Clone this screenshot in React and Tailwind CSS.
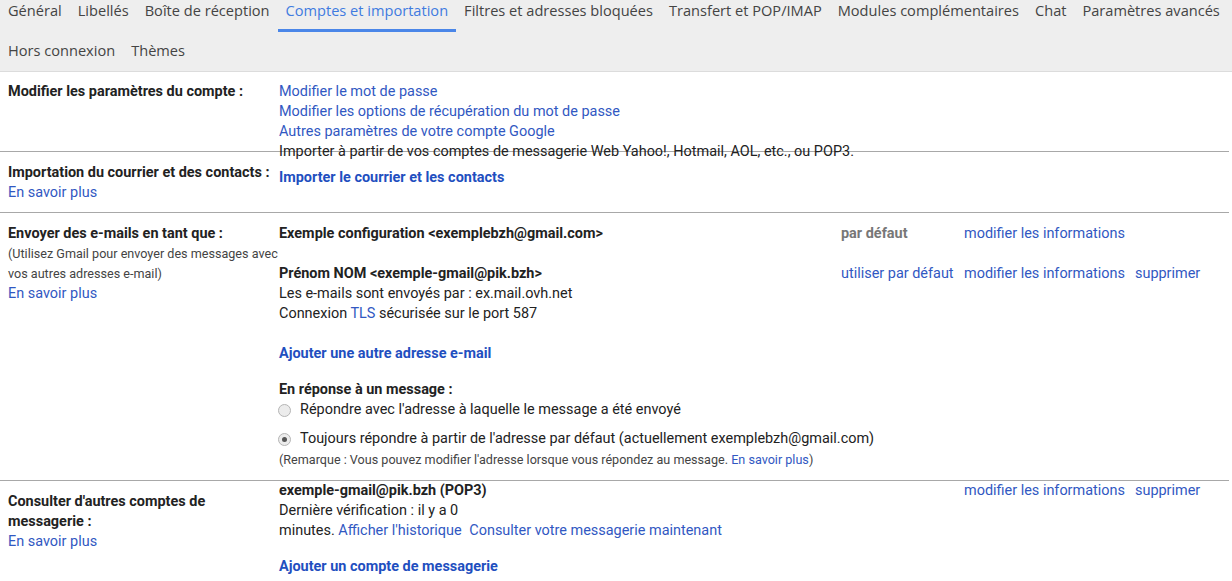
const tabs = [
  'Général',
  'Libellés',
  'Boîte de réception',
  'Comptes et importation',
  'Filtres et adresses bloquées',
  'Transfert et POP/IMAP',
  'Modules complémentaires',
  'Chat',
  'Paramètres avancés',
  'Hors connexion',
  'Thèmes',
];

function Radio({ checked }) {
  return (
    <span className="relative inline-flex w-[13px] h-[13px] shrink-0 rounded-full border border-[#b5b5b5] bg-[#ececec] items-center justify-center">
      {checked && <span className="w-[5px] h-[5px] rounded-full bg-[#555]" />}
    </span>
  );
}

export default function App() {
  const link = 'text-[#3158c2] cursor-pointer';
  const boldLink = 'font-bold text-[#1f4fbf] cursor-pointer';

  return (
    <div
      className="min-h-screen bg-white text-[14.45px] leading-5 text-[#222]"
      style={{ fontFamily: 'Roboto, "Liberation Sans", Arial, sans-serif' }}
    >
      {/* Tabs */}
      <div className="h-[72px] bg-[#eeeeee] border-b border-[#dcdcdc]">
        <div
          className="flex flex-wrap gap-y-2 text-[14.6px] text-[#444]"
          style={{ fontFamily: '"Open Sans", Roboto, sans-serif' }}
        >
          {tabs.map((t) => {
            const active = t === 'Comptes et importation';
            return (
              <div
                key={t}
                className={
                  'h-8 px-2 leading-5 cursor-pointer ' +
                  (active ? 'border-b-[3px] border-[#4a86e8] text-[#3f7be0]' : '')
                }
              >
                {t}
              </div>
            );
          })}
        </div>
      </div>

      {/* Modifier les paramètres du compte */}
      <div className="flex pt-[10px] pb-[9px]">
        <div className="w-[279px] pl-2 font-bold shrink-0">Modifier les paramètres du compte :</div>
        <div className="flex flex-col">
          <span className={link}>Modifier le mot de passe</span>
          <span className={link}>Modifier les options de récupération du mot de passe</span>
          <span className={link}>Autres paramètres de votre compte Google</span>
        </div>
      </div>

      {/* Importation */}
      <div className="flex border-t border-[#a8a8a8] mr-[3px] pt-[11px] pb-[9px]">
        <div className="w-[279px] pl-2 shrink-0">
          <div className="font-bold">Importation du courrier et des contacts :</div>
          <div className={link}>En savoir plus</div>
        </div>
        <div className="flex flex-col -mt-[21px]">
          <span>
            Importer à partir de vos comptes de messagerie Web Yahoo!, Hotmail, AOL, etc., ou POP3.
          </span>
          <span className={'mt-[6px] ' + boldLink}>Importer le courrier et les contacts</span>
        </div>
      </div>

      {/* Envoyer des e-mails en tant que */}
      <div className="flex border-t border-[#a8a8a8] mr-[3px] pt-[11px] pb-[10px]">
        <div className="w-[279px] pl-2 shrink-0">
          <div className="font-bold">Envoyer des e-mails en tant que :</div>
          <div className="text-[12.6px] leading-5 text-[#444]">
            (Utilisez Gmail pour envoyer des messages avec vos autres adresses e-mail)
          </div>
          <div className={link}>En savoir plus</div>
        </div>
        <div className="flex flex-col flex-1">
          <div className="flex">
            <div className="w-[562px] font-bold">Exemple configuration &lt;exemplebzh@gmail.com&gt;</div>
            <div className="w-[123px] font-bold text-[#777]">par défaut</div>
            <div className={'w-[171px] ' + link}>modifier les informations</div>
          </div>
          <div className="flex mt-5">
            <div className="w-[562px]">
              <div className="font-bold">Prénom NOM &lt;exemple-gmail@pik.bzh&gt;</div>
              <div>Les e-mails sont envoyés par : ex.mail.ovh.net</div>
              <div>
                Connexion <span className={link}>TLS</span> sécurisée sur le port 587
              </div>
            </div>
            <div className={'w-[123px] ' + link}>utiliser par défaut</div>
            <div className={'w-[171px] ' + link}>modifier les informations</div>
            <div className={link}>supprimer</div>
          </div>
          <div className={'mt-5 ' + boldLink}>Ajouter une autre adresse e-mail</div>

          <div className="mt-4 font-bold">En réponse à un message :</div>
          <label className="flex items-center gap-[9px] -ml-[1px]">
            <Radio />
            <span>Répondre avec l'adresse à laquelle le message a été envoyé</span>
          </label>
          <label className="flex items-center gap-[9px] -ml-[1px] mt-[9px]">
            <Radio checked />
            <span>Toujours répondre à partir de l'adresse par défaut (actuellement exemplebzh@gmail.com)</span>
          </label>
          <div className="text-[12.6px] leading-5 text-[#444] mt-[1px]">
            (Remarque : Vous pouvez modifier l'adresse lorsque vous répondez au message.{' '}
            <span className={link}>En savoir plus</span>)
          </div>
        </div>
      </div>

      {/* Consulter d'autres comptes */}
      <div className="flex border-t border-[#a8a8a8] mr-[3px] pb-[10px]">
        <div className="w-[279px] pl-2 pt-[11px] shrink-0">
          <div className="font-bold w-[225px]">Consulter d'autres comptes de messagerie :</div>
          <div className={link}>En savoir plus</div>
        </div>
        <div className="flex flex-col flex-1">
          <div className="flex">
            <div className="w-[685px]">
              <div className="font-bold">exemple-gmail@pik.bzh (POP3)</div>
              <div>Dernière vérification : il y a 0</div>
              <div>
                minutes. <span className={link}>Afficher l'historique</span>{' '}
                <span className={'ml-[4px] ' + link}>Consulter votre messagerie maintenant</span>
              </div>
            </div>
            <div className={'w-[171px] ' + link}>modifier les informations</div>
            <div className={link}>supprimer</div>
          </div>
          <div className={'mt-4 ' + boldLink}>Ajouter un compte de messagerie</div>
        </div>
      </div>
    </div>
  );
}
